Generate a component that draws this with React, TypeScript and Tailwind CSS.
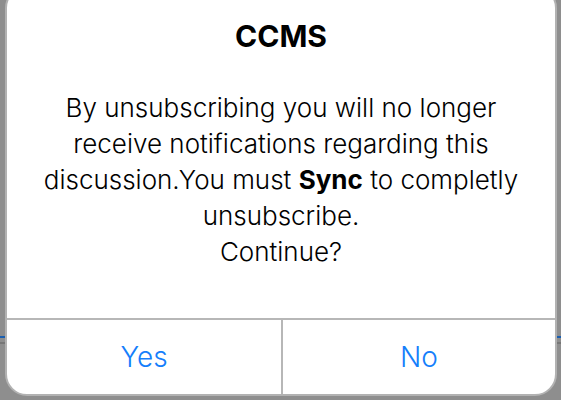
export default function App() {
  return (
    <div className="relative h-[400px] w-[561px] overflow-hidden bg-[#8e8e8e] pb-[4px] pl-[5px] pr-[4px] font-['Inter','Liberation_Sans',Arial,sans-serif]">
      {/* bits of the screen behind the alert */}
      <div className="absolute left-0 top-[336px] h-[2px] w-[6px] bg-[#1b5fb0]" />
      <div className="absolute left-0 top-[342px] h-[2px] w-[6px] bg-[#777]" />
      <div className="absolute right-0 top-[336px] h-[2px] w-[6px] bg-[#1b5fb0]" />
      <div className="absolute right-0 top-[342px] h-[2px] w-[6px] bg-[#777]" />

      <div className="relative mt-[-14px] flex h-[410px] flex-col rounded-[22px] border-2 border-[#b2b2b2] bg-white">
        <div className="flex h-[330px] flex-col items-center text-center text-black">
          <h1 className="mt-[30px] text-[30px] font-bold leading-[36px]">CCMS</h1>
          <p className="mt-[36px] px-3 text-[26px] font-light leading-[36px]">
            By unsubscribing you will no longer
            <br />
            receive notifications regarding this
            <br />
            discussion.You must <span className="font-bold">Sync</span> to completly
            <br />
            unsubscribe.
            <br />
            Continue?
          </p>
        </div>
        <div className="grid flex-1 grid-cols-2 border-t-2 border-[#b7b7b7] text-[28px] font-light text-[#157efb]">
          <button type="button" className="flex items-center justify-center">
            Yes
          </button>
          <button type="button" className="flex items-center justify-center border-l-2 border-[#b7b7b7]">
            No
          </button>
        </div>
      </div>
    </div>
  );
}
